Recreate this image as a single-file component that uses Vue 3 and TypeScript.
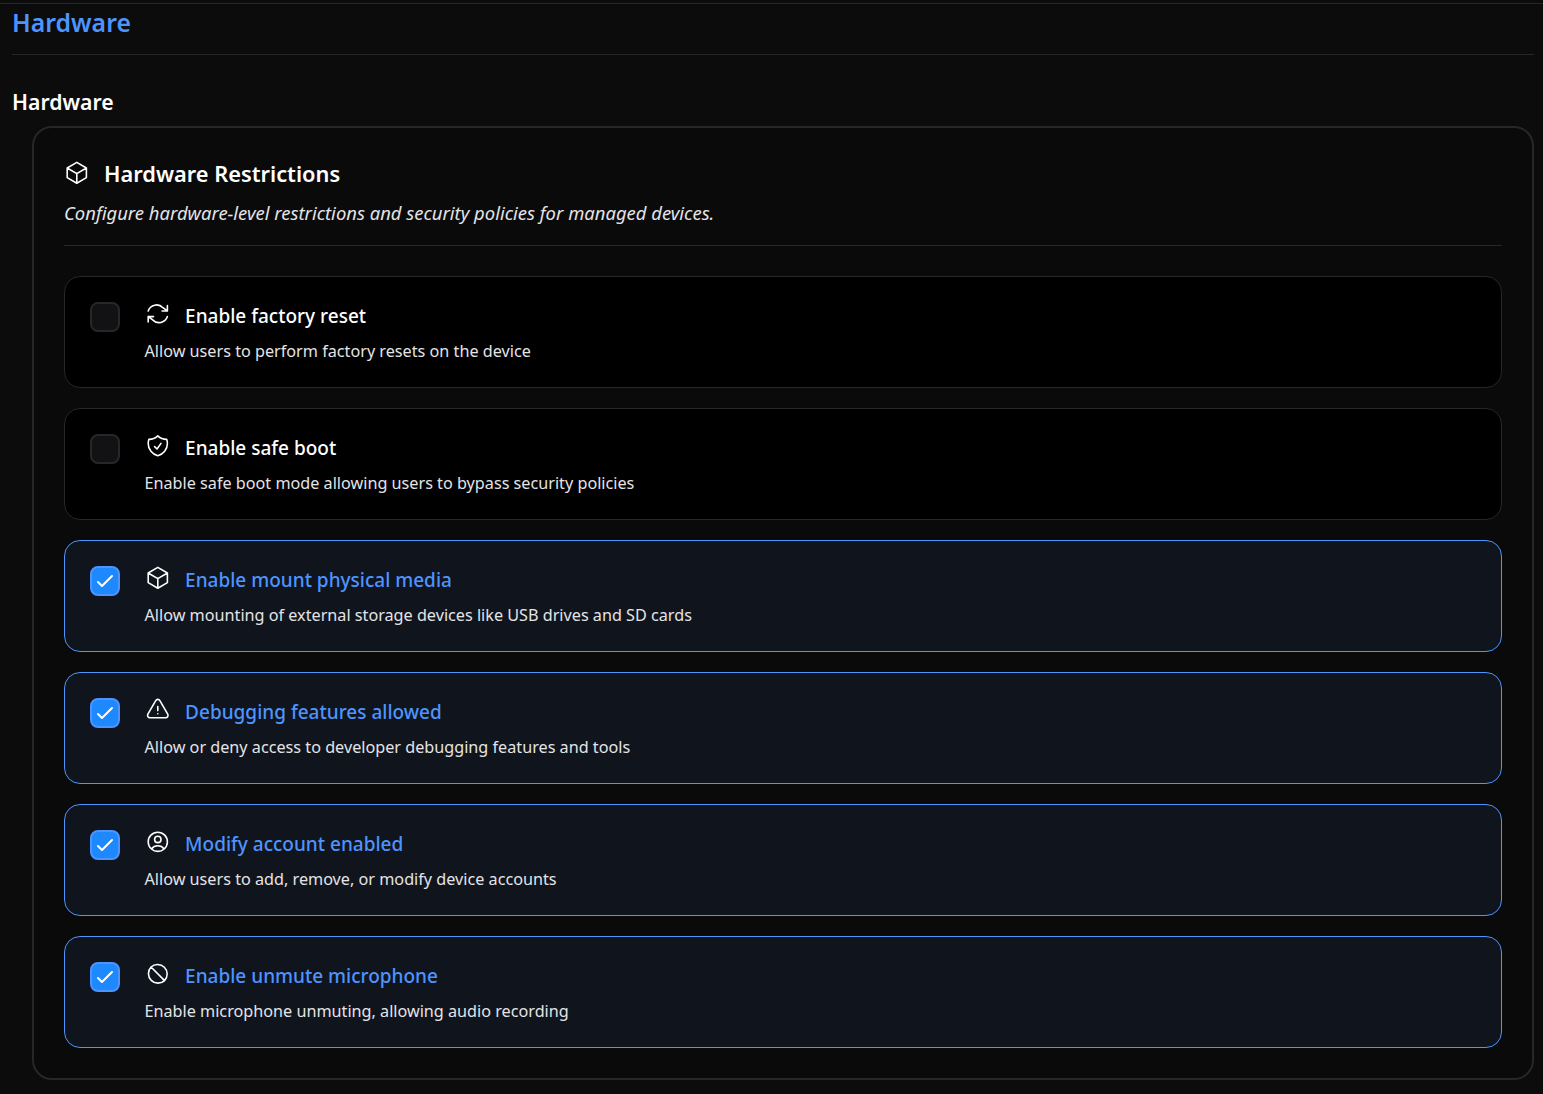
<script setup lang="ts">
interface Restriction {
  id: string;
  label: string;
  description: string;
  icon: string;
  checked: boolean;
}

const restrictions: Restriction[] = [
  { id: 'reset', label: 'Enable factory reset', description: 'Allow users to perform factory resets on the device', icon: 'refresh', checked: false },
  { id: 'boot', label: 'Enable safe boot', description: 'Enable safe boot mode allowing users to bypass security policies', icon: 'shield', checked: false },
  { id: 'media', label: 'Enable mount physical media', description: 'Allow mounting of external storage devices like USB drives and SD cards', icon: 'cube', checked: true },
  { id: 'debug', label: 'Debugging features allowed', description: 'Allow or deny access to developer debugging features and tools', icon: 'warning', checked: true },
  { id: 'account', label: 'Modify account enabled', description: 'Allow users to add, remove, or modify device accounts', icon: 'user', checked: true },
  { id: 'mic', label: 'Enable unmute microphone', description: 'Enable microphone unmuting, allowing audio recording', icon: 'ban', checked: true }
];
</script>

<template>
  <div class="page">
    <h1 class="page-title">Hardware</h1>
    <h2 class="section-title">Hardware</h2>

    <section class="card">
      <div class="card-head">
        <div class="card-title-row">
          <svg class="icon" viewBox="0 0 24 24" fill="none" stroke="currentColor" stroke-width="1.5" stroke-linecap="round" stroke-linejoin="round">
            <path d="M21 7.5 12 2.25 3 7.5m18 0L12 12.75M21 7.5v9L12 21.75m-9-14.25 9 5.25M3 7.5v9l9 5.25m0-9v9" />
          </svg>
          <h3 class="card-title">Hardware Restrictions</h3>
        </div>
        <p class="card-desc">Configure hardware-level restrictions and security policies for managed devices.</p>
      </div>

      <div class="list">
        <label v-for="item in restrictions" :key="item.id" class="item" :class="{ 'is-checked': item.checked }">
          <span class="check">
            <svg v-if="item.checked" viewBox="0 0 24 24" fill="none" stroke="currentColor" stroke-width="2" stroke-linecap="round" stroke-linejoin="round">
              <path d="M5 13l4 4L19 7" />
            </svg>
          </span>
          <div class="item-body">
            <div class="item-title-row">
              <svg class="icon" viewBox="0 0 24 24" fill="none" stroke="currentColor" stroke-width="1.5" stroke-linecap="round" stroke-linejoin="round">
                <path v-if="item.icon === 'refresh'" d="M16 9.35h5V4.35M2.99 19.64v-5h5M2.99 9.35a8.25 8.25 0 0 1 13.8-3.08L21 9.35M21 14.64a8.25 8.25 0 0 1-13.8 3.08L2.99 14.64" />
                <path v-else-if="item.icon === 'shield'" d="M9 12.75 11.25 15 15 9.75M12 2.71A11.96 11.96 0 0 1 3.6 6 12 12 0 0 0 3 9.75c0 5.59 3.82 10.29 9 11.62 5.18-1.33 9-6.03 9-11.62 0-1.31-.21-2.57-.6-3.75h-.15A11.96 11.96 0 0 1 12 2.71Z" />
                <path v-else-if="item.icon === 'cube'" d="M21 7.5 12 2.25 3 7.5m18 0L12 12.75M21 7.5v9L12 21.75m-9-14.25 9 5.25M3 7.5v9l9 5.25m0-9v9" />
                <path v-else-if="item.icon === 'warning'" d="M12 9v3.75M2.7 16.13c-.87 1.5.22 3.37 1.95 3.37h14.7c1.73 0 2.81-1.87 1.95-3.37L13.95 3.38c-.87-1.5-3.03-1.5-3.9 0L2.7 16.13ZM12 15.75h.01v.01H12v-.01Z" />
                <path v-else-if="item.icon === 'user'" d="M17.98 18.73A7.49 7.49 0 0 0 12 15.75a7.49 7.49 0 0 0-5.98 2.98M17.98 18.73A9 9 0 1 0 6.02 18.73M17.98 18.73A8.97 8.97 0 0 1 12 21a8.97 8.97 0 0 1-5.98-2.27M15 9.75a3 3 0 1 1-6 0 3 3 0 0 1 6 0Z" />
                <path v-else d="M18.36 18.36A9 9 0 0 0 5.64 5.64M18.36 18.36A9 9 0 0 1 5.64 5.64M18.36 18.36 5.64 5.64" />
              </svg>
              <span class="item-label">{{ item.label }}</span>
            </div>
            <p class="item-desc">{{ item.description }}</p>
          </div>
        </label>
      </div>
    </section>
  </div>
</template>

<style>
html,
body {
  background: #0c0c0c;
}
</style>

<style scoped>
.page {
  box-sizing: border-box;
  height: 1094px;
  padding: 3px 9px 0 12px;
  font-family: "Noto Sans", "Open Sans", sans-serif;
  color: #fff;
  position: relative;
  background: #0c0c0c;
}

.page::before {
  content: "";
  position: absolute;
  left: 0;
  right: 0;
  top: 3px;
  height: 1px;
  background: #27272a;
}

.page-title {
  margin: 0;
  height: 52px;
  box-sizing: border-box;
  border-bottom: 1px solid #27272a;
  font-size: 24.8px;
  line-height: 38px;
  font-weight: 600;
  color: #4d94ff;
}

.section-title {
  margin: 0;
  padding-top: 32px;
  font-size: 21.2px;
  line-height: 30px;
  font-weight: 600;
  color: #fff;
}

.card {
  box-sizing: border-box;
  margin: 9px 0 0 20px;
  height: 954px;
  padding: 30px;
  border: 2px solid #27272a;
  border-radius: 20px;
  background: #0a0a0a;
}

.card-head {
  height: 87px;
  border-bottom: 1px solid #27272a;
}

.card-title-row {
  display: flex;
  align-items: center;
  gap: 14.4px;
  height: 31px;
}

.card-title-row .icon {
  margin-bottom: 2px;
}

.card-title {
  margin: 0;
  font-size: 21.8px;
  line-height: 31px;
  font-weight: 600;
}

.card-desc {
  margin: 10px 0 0;
  font-size: 18.45px;
  line-height: 27px;
  font-style: italic;
  color: #e4e4e7;
}

.icon {
  flex: none;
  width: 25.6px;
  height: 25.6px;
  color: #fff;
}

.list {
  display: flex;
  flex-direction: column;
  gap: 20px;
  margin-top: 30px;
}

.item {
  box-sizing: border-box;
  display: flex;
  gap: 24.5px;
  height: 112px;
  padding: 25px;
  border: 1px solid #27272a;
  border-radius: 16px;
  background: #000;
}

.item.is-checked {
  border-color: #4d94ff;
  background: #10141d;
}

.check {
  box-sizing: border-box;
  flex: none;
  display: flex;
  align-items: center;
  justify-content: center;
  width: 30px;
  height: 30px;
  border: 2px solid #27272a;
  border-radius: 8px;
  background: #121214;
  color: #fff;
}

.is-checked .check {
  border-color: #4d94ff;
  background: #1e88ff;
}

.check svg {
  flex: none;
  width: 24px;
  height: 24px;
}

.item-body {
  min-width: 0;
}

.item-title-row {
  display: flex;
  align-items: center;
  gap: 15px;
  height: 28px;
}

.item-title-row .icon {
  margin-bottom: 4px;
}

.item-label {
  font-size: 19px;
  line-height: 28px;
  font-weight: 500;
  color: #fff;
}

.is-checked .item-label {
  color: #4d94ff;
}

.item-desc {
  margin: 9px 0 0;
  font-size: 16.2px;
  line-height: 24px;
  color: #e4e4e7;
}
</style>
